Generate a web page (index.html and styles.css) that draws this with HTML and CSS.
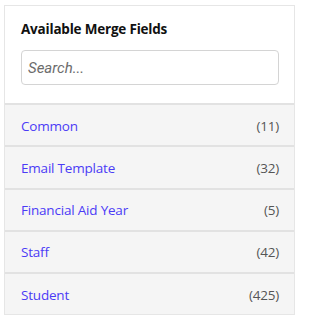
FILE: index.html
```html
<!DOCTYPE html>
<html>
<head>
<meta charset="utf-8">
<link rel="stylesheet" href="styles.css">
</head>
<body>
<div class="panel">
  <div class="panel-header">
    <div class="title">Available Merge Fields</div>
    <input class="search" type="text" placeholder="Search...">
  </div>
  <ul class="groups">
    <li class="group"><span class="name">Common</span><span class="count">(11)</span></li>
    <li class="group"><span class="name">Email Template</span><span class="count">(32)</span></li>
    <li class="group"><span class="name">Financial Aid Year</span><span class="count">(5)</span></li>
    <li class="group"><span class="name">Staff</span><span class="count">(42)</span></li>
    <li class="group"><span class="name">Student</span><span class="count">(425)</span></li>
  </ul>
</div>
</body>
</html>
```
FILE: styles.css
```css
html, body {
  margin: 0;
  padding: 0;
  background: #ffffff;
}
body {
  padding: 5px 4px 0 4px;
  font-family: "Open Sans", "Noto Sans", sans-serif;
}
.panel {
  width: 289px;
  border: 1px solid #e6e6e6;
  background: #ffffff;
}
.panel-header {
  padding: 14px 15px 18px 16px;
  border-bottom: 2px solid #e2e2e2;
}
.title {
  font-size: 13.5px;
  font-weight: 700;
  color: #111111;
  line-height: 18px;
  letter-spacing: -0.2px;
  margin-bottom: 12px;
}
.search {
  display: block;
  box-sizing: border-box;
  width: 258px;
  height: 35px;
  margin: 0;
  padding: 0 6px;
  border: 1px solid #d4d4d4;
  border-radius: 4px;
  font-family: Roboto, sans-serif;
  font-size: 15px;
  font-style: italic;
  outline: none;
}
.search::placeholder {
  color: #6c6c6c;
  font-style: italic;
}
.groups {
  list-style: none;
  margin: 0;
  padding: 0;
}
.group {
  display: flex;
  justify-content: space-between;
  align-items: center;
  height: 39.25px;
  padding: 1px 15px 0 16px;
  background: #f5f5f5;
  border-bottom: 2px solid #e2e2e2;
  font-size: 13.5px;
  letter-spacing: -0.2px;
}
.group:last-child {
  border-bottom: none;
}
.name {
  color: #4b3bf6;
}
.count {
  color: #555555;
}
```
